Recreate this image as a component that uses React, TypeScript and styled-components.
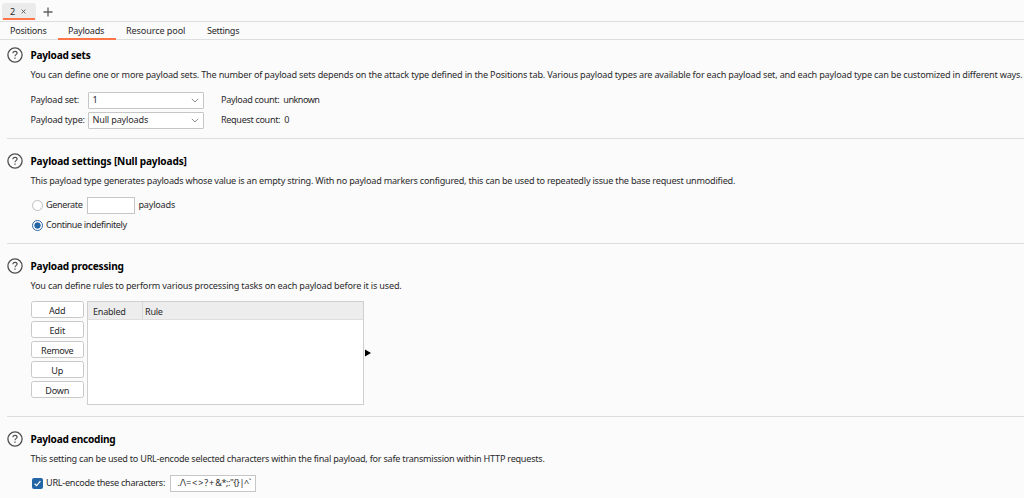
import React from "react";
import styled, { createGlobalStyle } from "styled-components";

const GlobalStyle = createGlobalStyle`
  * { box-sizing: border-box; }
  body {
    margin: 0;
    background: #fbfbfb;
    color: #2a2a2c;
    font: 9.1px/20px "Noto Sans", "Open Sans", sans-serif;
    overflow: hidden;
  }
`;

const Page = styled.main`
  width: 1024px;
  height: 498px;
  overflow: hidden;
  background: #fbfbfb;
`;

const Text = styled.span<{ $ls?: number }>`
  display: inline-block;
  white-space: pre;
  letter-spacing: ${(p) => p.$ls ?? -0.25}px;
`;

const AttackTabs = styled.div`
  display: flex;
  height: 22px;
  padding: 3px 0 0 2px;
  border-bottom: 1px solid #dcdfe0;
`;

const AttackTab = styled.div`
  display: flex;
  flex-direction: column;
  width: 34px;
  height: 17px;
  padding: 0 1px;
  border-radius: 3px 3px 0 0;
  background: #ebebeb;
`;

const AttackTabLabel = styled.div`
  display: flex;
  align-items: center;
  height: 15px;
  padding: 2px 0 0 7px;
  gap: 6px;
`;

const AttackTabMarker = styled.div`
  height: 2px;
  background: #ff7448;
`;

const NewTab = styled.div`
  display: flex;
  padding: 4px 0 0 7px;
`;

const Navigation = styled.nav`
  display: flex;
  height: 18px;
  border-bottom: 1px solid #dcdfe0;
`;

const NavItem = styled.div<{ $width: number; $active?: boolean }>`
  width: ${(p) => p.$width}px;
  height: 18px;
  padding-left: 10px;
  line-height: 18px;
  border-bottom: ${(p) => (p.$active ? "2px solid #ff7448" : "0")};
`;

const Section = styled.section<{ $height: number; $top?: number }>`
  display: grid;
  grid-template-columns: 23.5px 1fr;
  align-content: start;
  height: ${(p) => p.$height}px;
  padding: ${(p) => p.$top ?? 12}px 0 0 7px;
`;

const Divider = styled.hr`
  height: 1px;
  margin: 0 0 0 7px;
  border: 0;
  background: #dedede;
`;

const HelpCell = styled.div`
  display: flex;
  align-items: center;
  height: 20px;
`;

const Title = styled.h2`
  margin: 0;
  height: 20px;
  color: #000;
  font-size: 10.1px;
  font-weight: 700;
  line-height: 20px;
`;

const Description = styled.p`
  margin: 0;
  height: 20px;
`;

const Fields = styled.div`
  display: grid;
  grid-template-columns: 57px 116px 17.5px auto;
  grid-auto-rows: 20px;
  padding-top: 5px;
  align-items: center;
`;

const Select = styled.div`
  display: flex;
  align-items: center;
  justify-content: space-between;
  height: 17px;
  padding: 0 3.5px 0 4px;
  background: #fff;
  border: 1px solid #c6c6c6;
  border-radius: 1px;
`;

const Count = styled.div`
  grid-column: 4;
  display: flex;
  gap: 4px;
`;

const OptionRow = styled.div<{ $top?: number }>`
  display: flex;
  align-items: center;
  height: 20px;
  margin-top: ${(p) => p.$top ?? 0}px;
  padding-left: 1px;
`;

const Radio = styled.span<{ $checked?: boolean }>`
  flex: none;
  width: 11px;
  height: 11px;
  margin-right: 3.5px;
  border: 1px solid ${(p) => (p.$checked ? "#2a66a5" : "#bdbdbd")};
  border-radius: 50%;
  background: ${(p) => (p.$checked ? "radial-gradient(circle, #2465a6 2.8px, #fff 3.5px)" : "#fff")};
`;

const Input = styled.div<{ $width: number; $pad?: number }>`
  display: flex;
  align-items: center;
  width: ${(p) => p.$width}px;
  height: 17px;
  padding-left: ${(p) => p.$pad ?? 0}px;
  margin: 0 3.5px 0 4.5px;
  background: #fff;
  border: 1px solid #c6c6c6;
`;

const Processing = styled.div`
  display: flex;
  padding-top: 5px;
`;

const Actions = styled.div`
  display: flex;
  flex-direction: column;
  gap: 3px;
  width: 53.5px;
  margin-right: 3px;
`;

const Button = styled.button`
  height: 17px;
  padding: 1px 0 0;
  background: #fff;
  border: 1px solid #c9c9c9;
  border-radius: 2.5px;
  color: inherit;
  font: inherit;
  line-height: 15px;
`;

const RuleTable = styled.div`
  width: 277px;
  height: 104px;
  background: #fff;
  border: 1px solid #cfcfcf;
`;

const RuleHead = styled.div`
  display: grid;
  grid-template-columns: 55px 1fr;
  height: 18px;
  background: #ededed;
  border-bottom: 1px solid #dedede;
  line-height: 19px;
`;

const RuleCell = styled.div<{ $pad: number; $line?: boolean }>`
  height: 17px;
  padding-left: ${(p) => p.$pad}px;
  border-right: ${(p) => (p.$line ? "1px solid #d8d8d8" : "0")};
`;

const Expander = styled.div`
  display: flex;
  align-items: center;
  height: 104px;
  padding-left: 1px;
`;

const Checkbox = styled.span`
  display: flex;
  width: 11px;
  height: 11px;
  margin-right: 3.5px;
  border-radius: 2px;
  background: #2465a6;
`;

const HelpIcon = () => (
  <svg width="16" height="16" viewBox="0 0 16 16" fill="none" stroke="#505050">
    <circle cx="8" cy="8" r="7.1" strokeWidth="1.3" />
    <path d="M5.9 6.3C5.9 5 6.8 4.3 8 4.3s2.1.7 2.1 1.8c0 1.5-2.1 1.6-2.1 3.1" strokeWidth="1.15" />
    <path d="M8 10.4v1.3" strokeWidth="1.3" />
  </svg>
);

const Chevron = () => (
  <svg width="8" height="5" viewBox="0 0 8 5" fill="none" stroke="#8c8c8c">
    <path d="M.8.8 4 4 7.2.8" />
  </svg>
);

const Help = () => (
  <HelpCell>
    <HelpIcon />
  </HelpCell>
);

export default function App() {
  return (
    <Page>
      <GlobalStyle />
      <AttackTabs>
        <AttackTab>
          <AttackTabLabel>
            <Text>2</Text>
            <svg width="5" height="5" viewBox="0 0 5 5" stroke="#555" strokeWidth=".9">
              <path d="M.6.6 4.4 4.4M4.4.6.6 4.4" />
            </svg>
          </AttackTabLabel>
          <AttackTabMarker />
        </AttackTab>
        <NewTab>
          <svg width="10" height="10" viewBox="0 0 10 10" stroke="#606060" strokeWidth="1.3">
            <path d="M5 .5v9M.5 5h9" />
          </svg>
        </NewTab>
      </AttackTabs>
      <Navigation>
        <NavItem $width={58}><Text>Positions</Text></NavItem>
        <NavItem $width={58} $active><Text>Payloads</Text></NavItem>
        <NavItem $width={81}><Text $ls={-0.1}>Resource pool</Text></NavItem>
        <NavItem $width={60}><Text $ls={-0.3}>Settings</Text></NavItem>
      </Navigation>

      <Section $height={98} $top={5}>
        <Help />
        <div>
          <Title><Text $ls={-0.25}>Payload sets</Text></Title>
          <Description>
            <Text $ls={-0.187}>You can define one or more payload sets. The number of payload sets depends on the attack type defined in the Positions tab. Various payload types are available for each payload set, and each payload type can be customized in different ways.</Text>
          </Description>
          <Fields>
            <Text>Payload set:</Text>
            <Select><Text>1</Text><Chevron /></Select>
            <Count><Text $ls={-0.33}>Payload count:</Text><Text $ls={-0.55}>unknown</Text></Count>
            <Text $ls={-0.23}>Payload type:</Text>
            <Select><Text $ls={-0.17}>Null payloads</Text><Chevron /></Select>
            <Count><Text $ls={-0.34}>Request count:</Text><Text>0</Text></Count>
          </Fields>
        </div>
      </Section>
      <Divider />

      <Section $height={104}>
        <Help />
        <div>
          <Title><Text $ls={-0.15}>Payload settings [Null payloads]</Text></Title>
          <Description>
            <Text $ls={-0.214}>This payload type generates payloads whose value is an empty string. With no payload markers configured, this can be used to repeatedly issue the base request unmodified.</Text>
          </Description>
          <OptionRow $top={4}>
            <Radio /><Text $ls={-0.4}>Generate</Text><Input $width={48} /><Text $ls={-0.19}>payloads</Text>
          </OptionRow>
          <OptionRow>
            <Radio $checked /><Text $ls={-0.38}>Continue indefinitely</Text>
          </OptionRow>
        </div>
      </Section>
      <Divider />

      <Section $height={172}>
        <Help />
        <div>
          <Title><Text $ls={-0.2}>Payload processing</Text></Title>
          <Description>
            <Text $ls={-0.176}>You can define rules to perform various processing tasks on each payload before it is used.</Text>
          </Description>
          <Processing>
            <Actions>
              <Button><Text $ls={-0.1}>Add</Text></Button>
              <Button><Text $ls={-0.2}>Edit</Text></Button>
              <Button><Text $ls={-0.35}>Remove</Text></Button>
              <Button><Text $ls={-0.1}>Up</Text></Button>
              <Button><Text $ls={-0.2}>Down</Text></Button>
            </Actions>
            <RuleTable>
              <RuleHead>
                <RuleCell $pad={5} $line><Text>Enabled</Text></RuleCell>
                <RuleCell $pad={2}><Text>Rule</Text></RuleCell>
              </RuleHead>
            </RuleTable>
            <Expander>
              <svg width="6" height="8" viewBox="0 0 6 8"><path d="M0 .5 6 4 0 7.5z" fill="#000" /></svg>
            </Expander>
          </Processing>
        </div>
      </Section>
      <Divider />

      <Section $height={81}>
        <Help />
        <div>
          <Title><Text $ls={-0.25}>Payload encoding</Text></Title>
          <Description>
            <Text $ls={-0.24}>This setting can be used to URL-encode selected characters within the final payload, for safe transmission within HTTP requests.</Text>
          </Description>
          <OptionRow $top={4}>
            <Checkbox>
              <svg width="11" height="11" viewBox="0 0 11 11" fill="none" stroke="#fff" strokeWidth="1.2">
                <path d="m2.6 5.7 2 1.9 3.8-4.4" />
              </svg>
            </Checkbox>
            <Text $ls={-0.27}>URL-encode these characters:</Text>
            <Input $width={86} $pad={7}>
              <Text $ls={-0.3}>{"./\\"}</Text>
              <Text $ls={0.9}>{"=<>?+"}</Text>
              <Text $ls={-0.42}>{"&*;:\"{}|^`"}</Text>
            </Input>
          </OptionRow>
        </div>
      </Section>
    </Page>
  );
}
